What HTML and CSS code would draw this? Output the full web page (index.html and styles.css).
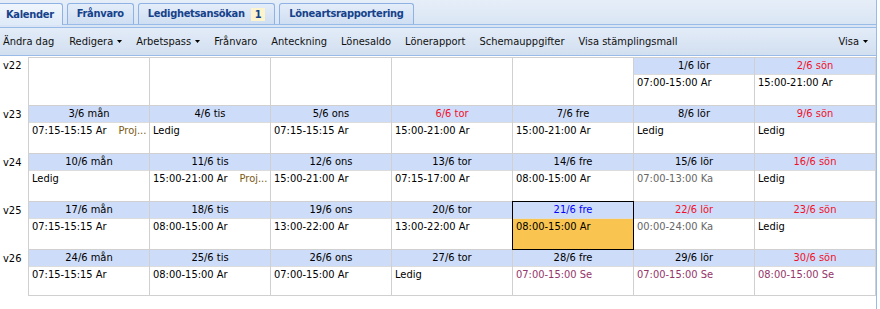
FILE: index.html
```html
<!DOCTYPE html>
<html lang="sv">
<head>
<meta charset="utf-8">
<title>Kalender</title>
<link rel="stylesheet" href="styles.css">
</head>
<body>
<div class="panel">
  <div class="tabstrip">
    <div class="tab active first">Kalender</div>
    <div class="tab">Frånvaro</div>
    <div class="tab">Ledighetsansökan <span class="badge">1</span></div>
    <div class="tab">Löneartsrapportering</div>
  </div>
  <div class="tabgap"></div>
  <div class="toolbar">
    <span class="btn first">Ändra dag</span>
    <span class="btn">Redigera<svg class="arr" width="5" height="3" viewBox="0 0 5 3"><path d="M0 0h5L2.5 3z"/></svg></span>
    <span class="btn">Arbetspass<svg class="arr" width="5" height="3" viewBox="0 0 5 3"><path d="M0 0h5L2.5 3z"/></svg></span>
    <span class="btn">Frånvaro</span>
    <span class="btn">Anteckning</span>
    <span class="btn">Lönesaldo</span>
    <span class="btn">Lönerapport</span>
    <span class="btn">Schemauppgifter</span>
    <span class="btn">Visa stämplingsmall</span>
    <span class="fill"></span>
    <span class="btn last">Visa<svg class="arr" width="5" height="3" viewBox="0 0 5 3"><path d="M0 0h5L2.5 3z"/></svg></span>
  </div>
  <div class="grid">
    <div class="week">
      <div class="wk">v22</div>
      <div class="days top">
        <div class="day empty"></div>
        <div class="day empty"></div>
        <div class="day empty"></div>
        <div class="day empty"></div>
        <div class="day empty"></div>
        <div class="day"><div class="hd">1/6 lör</div><div class="bd">07:00-15:00 Ar</div></div>
        <div class="day"><div class="hd red">2/6 sön</div><div class="bd">15:00-21:00 Ar</div></div>
      </div>
    </div>
    <div class="week">
      <div class="wk">v23</div>
      <div class="days">
        <div class="day"><div class="hd">3/6 mån</div><div class="bd"><span>07:15-15:15 Ar</span><span class="proj">Proj...</span></div></div>
        <div class="day"><div class="hd">4/6 tis</div><div class="bd">Ledig</div></div>
        <div class="day"><div class="hd">5/6 ons</div><div class="bd">07:15-15:15 Ar</div></div>
        <div class="day"><div class="hd red">6/6 tor</div><div class="bd">15:00-21:00 Ar</div></div>
        <div class="day"><div class="hd">7/6 fre</div><div class="bd">15:00-21:00 Ar</div></div>
        <div class="day"><div class="hd">8/6 lör</div><div class="bd">Ledig</div></div>
        <div class="day"><div class="hd red">9/6 sön</div><div class="bd">Ledig</div></div>
      </div>
    </div>
    <div class="week">
      <div class="wk">v24</div>
      <div class="days">
        <div class="day"><div class="hd">10/6 mån</div><div class="bd">Ledig</div></div>
        <div class="day"><div class="hd">11/6 tis</div><div class="bd"><span>15:00-21:00 Ar</span><span class="proj">Proj...</span></div></div>
        <div class="day"><div class="hd">12/6 ons</div><div class="bd">15:00-21:00 Ar</div></div>
        <div class="day"><div class="hd">13/6 tor</div><div class="bd">07:15-17:00 Ar</div></div>
        <div class="day"><div class="hd">14/6 fre</div><div class="bd">08:00-15:00 Ar</div></div>
        <div class="day"><div class="hd">15/6 lör</div><div class="bd ka">07:00-13:00 Ka</div></div>
        <div class="day"><div class="hd red">16/6 sön</div><div class="bd">Ledig</div></div>
      </div>
    </div>
    <div class="week">
      <div class="wk">v25</div>
      <div class="days">
        <div class="day"><div class="hd">17/6 mån</div><div class="bd">07:15-15:15 Ar</div></div>
        <div class="day"><div class="hd">18/6 tis</div><div class="bd">08:00-15:00 Ar</div></div>
        <div class="day"><div class="hd">19/6 ons</div><div class="bd">13:00-22:00 Ar</div></div>
        <div class="day"><div class="hd">20/6 tor</div><div class="bd">13:00-22:00 Ar</div></div>
        <div class="day sel"><div class="hd blue">21/6 fre</div><div class="bd">08:00-15:00 Ar</div></div>
        <div class="day"><div class="hd red">22/6 lör</div><div class="bd ka">00:00-24:00 Ka</div></div>
        <div class="day"><div class="hd red">23/6 sön</div><div class="bd">Ledig</div></div>
      </div>
    </div>
    <div class="week last">
      <div class="wk">v26</div>
      <div class="days">
        <div class="day"><div class="hd">24/6 mån</div><div class="bd">07:15-15:15 Ar</div></div>
        <div class="day"><div class="hd">25/6 tis</div><div class="bd">08:00-15:00 Ar</div></div>
        <div class="day"><div class="hd">26/6 ons</div><div class="bd">07:00-15:00 Ar</div></div>
        <div class="day"><div class="hd">27/6 tor</div><div class="bd">Ledig</div></div>
        <div class="day"><div class="hd">28/6 fre</div><div class="bd se">07:00-15:00 Se</div></div>
        <div class="day"><div class="hd">29/6 lör</div><div class="bd se">07:00-15:00 Se</div></div>
        <div class="day"><div class="hd red">30/6 sön</div><div class="bd se">08:00-15:00 Se</div></div>
      </div>
    </div>
  </div>
</div>
</body>
</html>
```

FILE: styles.css
```css
html, body {
  margin: 0;
  padding: 0;
  background: #fff;
}
body {
  font-family: "DejaVu Sans Condensed", "DejaVu Sans", "Liberation Sans", sans-serif;
  font-size: 11px;
  color: #000;
}
.panel {
  width: 876px;
  height: 309px;
  border-right: 1px solid #99bbe8;
  overflow: hidden;
}
.tabstrip {
  height: 24px;
  background: linear-gradient(#e6eef8, #dae5f4);
  border-bottom: 1px solid #99bbe8;
  display: flex;
  align-items: flex-end;
  gap: 4px;
}
.tab {
  height: 20px;
  line-height: 20px;
  padding: 0 9px;
  border: 1px solid #8db2e3;
  border-bottom: none;
  border-radius: 3px 3px 0 0;
  background: linear-gradient(#e4edf9, #cfdef2);
  color: #15428b;
  font-weight: bold;
  letter-spacing: -0.3px;
  display: flex;
  align-items: center;
}
.tab.first {
  padding-left: 6px;
  padding-right: 8px;
  border-left: none;
  border-radius: 0 3px 0 0;
}
.tab.active {
  background: linear-gradient(#f1f6fc, #deeaf8);
  height: 21px;
  margin-bottom: -1px;
}
.badge {
  margin-left: 6px;
  background: #fbf4cc;
  padding: 0 4px;
  line-height: 13px;
}
.tabgap {
  height: 2px;
  background: #d9e5f4;
}
.toolbar {
  height: 27px;
  border-top: 1px solid #99bbe8;
  border-bottom: 1px solid #99bbe8;
  background: linear-gradient(#e3ecf8, #d2dff0);
  display: flex;
  align-items: center;
  color: #111;
}
.btn {
  padding: 0 7px;
  display: flex;
  align-items: center;
  white-space: nowrap;
}
.btn.first {
  padding-left: 3px;
  padding-right: 8px;
}
.btn.last {
  padding-right: 8px;
}
.fill {
  flex: 1;
}
.arr {
  margin-left: 4px;
  fill: #000;
}
.grid {
  margin-top: 1px;
}
.week {
  display: flex;
}
.wk {
  width: 28px;
  padding: 2px 0 0 3px;
  box-sizing: border-box;
  line-height: 13px;
}
.days {
  display: grid;
  grid-template-columns: repeat(7, 121px);
  border-left: 1px solid #d0d0d0;
}
.days.top {
  border-top: 1px solid #d0d0d0;
}
.day {
  border-right: 1px solid #d0d0d0;
  border-bottom: 1px solid #d0d0d0;
  position: relative;
}
.day.empty {
  height: 47px;
}
.hd {
  height: 16px;
  line-height: 16px;
  text-align: center;
  background: #cddcf8;
  border-bottom: 1px solid #dcdcdc;
  white-space: nowrap;
}
.hd.red {
  color: #f0102a;
}
.hd.blue {
  color: #0000ff;
}
.bd {
  height: 30px;
  padding: 1px 3px 0 3px;
  box-sizing: border-box;
  line-height: 13px;
  display: flex;
  white-space: nowrap;
}
.week.last .bd {
  height: 28px;
}
.proj {
  margin-left: 12px;
  color: #7a5a12;
}
.bd.ka {
  color: #666;
}
.bd.se {
  color: #96356a;
}
.day.sel .bd {
  background: #f9c44f;
}
.day.sel::after {
  content: "";
  position: absolute;
  left: -1px;
  top: -1px;
  right: -1px;
  bottom: -1px;
  border: 1px solid #000;
  pointer-events: none;
}
```
